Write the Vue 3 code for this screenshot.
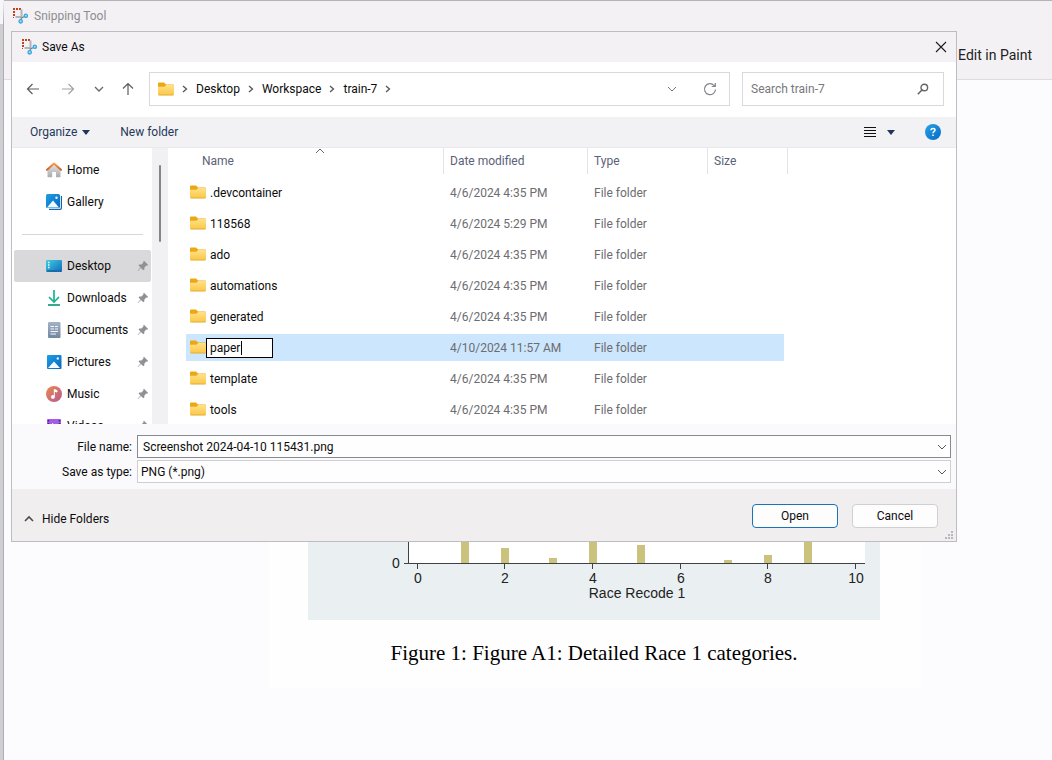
<script setup>
import { ref } from 'vue'

const crumbs = ['Desktop', 'Workspace', 'train-7']
const quick = [
  { name: 'Home', icon: 'home' },
  { name: 'Gallery', icon: 'gallery' },
]
const pinned = [
  { name: 'Desktop', icon: 'desktop', active: true },
  { name: 'Downloads', icon: 'downloads' },
  { name: 'Documents', icon: 'documents' },
  { name: 'Pictures', icon: 'pictures' },
  { name: 'Music', icon: 'music' },
  { name: 'Videos', icon: 'videos' },
]
const files = ref([
  { name: '.devcontainer', date: '4/6/2024 4:35 PM' },
  { name: '118568', date: '4/6/2024 5:29 PM' },
  { name: 'ado', date: '4/6/2024 4:35 PM' },
  { name: 'automations', date: '4/6/2024 4:35 PM' },
  { name: 'generated', date: '4/6/2024 4:35 PM' },
  { name: 'paper', date: '4/10/2024 11:57 AM', editing: true },
  { name: 'template', date: '4/6/2024 4:35 PM' },
  { name: 'tools', date: '4/6/2024 4:35 PM' },
])
const fileName = ref('Screenshot 2024-04-10 115431.png')
const bars = [
  { x: 153, h: 60 },
  { x: 193, h: 15 },
  { x: 241, h: 5 },
  { x: 281, h: 50 },
  { x: 329, h: 18 },
  { x: 416, h: 3 },
  { x: 456, h: 8 },
  { x: 496, h: 40 },
]
const ticks = [
  { x: 110, label: '0' },
  { x: 197, label: '2' },
  { x: 285, label: '4' },
  { x: 373, label: '6' },
  { x: 460, label: '8' },
  { x: 548, label: '10' },
]
</script>

<template>
  <svg class="defs" aria-hidden="true">
    <defs>
      <linearGradient id="g-folder" x1="0" y1="0" x2="0" y2="1"><stop offset="0" stop-color="#ffe08a" /><stop offset="1" stop-color="#fcc844" /></linearGradient>
      <linearGradient id="g-sky" x1="0" y1="0" x2="1" y2="1"><stop offset="0" stop-color="#1d9fe6" /><stop offset="1" stop-color="#0a66bd" /></linearGradient>
      <linearGradient id="g-desk" x1="0" y1="0" x2="1" y2="1"><stop offset="0" stop-color="#3fd0e0" /><stop offset="1" stop-color="#1268bd" /></linearGradient>
      <linearGradient id="g-wall" x1="0" y1="0" x2="0" y2="1"><stop offset="0" stop-color="#e4e4e6" /><stop offset="1" stop-color="#a9abae" /></linearGradient>
      <linearGradient id="g-roof" x1="0" y1="0" x2="0" y2="1"><stop offset="0" stop-color="#f5a04a" /><stop offset="1" stop-color="#cd6124" /></linearGradient>
      <linearGradient id="g-music" x1="0" y1="0" x2="1" y2="1"><stop offset="0" stop-color="#ea8a4c" /><stop offset="1" stop-color="#b65a92" /></linearGradient>
      <linearGradient id="g-doc" x1="0" y1="0" x2="0" y2="1"><stop offset="0" stop-color="#a3b3c9" /><stop offset="1" stop-color="#72869f" /></linearGradient>
      <linearGradient id="g-help" x1="0" y1="0" x2="1" y2="1"><stop offset="0" stop-color="#27a3e8" /><stop offset="1" stop-color="#0569c4" /></linearGradient>
      <symbol id="i-folder" viewBox="0 0 16 14">
        <path d="M0 1.500Q0 .5 1 .5H6L8 2.500H15Q16 2.500 16 3.500V7H0Z" fill="#eaa914" />
        <path d="M0 4.800H6.500L8.200 3H15.200Q16 3 16 4V12.200Q16 13.200 15 13.200H1Q0 13.200 0 12.200Z" fill="url(#g-folder)" />
        <path d="M.5 13H15.500" stroke="#d9a83c" stroke-width=".8" />
      </symbol>
      <symbol id="i-snip" viewBox="0 0 16 16">
        <path d="M1 0h2v2h-2zM4 0h2v2h-2zM7 0h2v2h-2zM1 3h2v2h-2zM1 6h2v2h-2zM1 9h1v1h-1z" fill="#c2421d" />
        <path d="M9.500 1.500V10M3.500 9H9.500" fill="none" stroke="#b1b3ba" stroke-width="2" />
        <path d="M9.500 10L12.500 8.500M9.500 9.500L9 12.500" fill="none" stroke="#777f88" stroke-width="1.300" />
        <circle cx="13.800" cy="7.800" r="1.600" fill="#a8e0f7" stroke="#35a6dd" stroke-width="1.300" />
        <circle cx="8.700" cy="13.300" r="1.700" fill="#a8e0f7" stroke="#35a6dd" stroke-width="1.300" />
      </symbol>
      <symbol id="i-pin" viewBox="0 0 12 12">
        <path d="M7 .8L11.200 5 10 5.700 9.300 5.600 7.400 7.500 7.300 9.500 6.300 10.300 4 8 1 11 .7 10.700 3.500 7.500 1.500 5.500 2.400 4.500 4.500 4.400 6.400 2.600 6.300 1.600Z" fill="#8e9196" />
      </symbol>
      <symbol id="i-home" viewBox="0 0 16 16">
        <path d="M1.500 7.500L8 2 14.500 7.500V14.500Q14.500 15.200 13.800 15.200H10V10H6.200V15.200H2.200Q1.500 15.200 1.500 14.500Z" fill="url(#g-wall)" />
        <path d="M1 7.800L8 1.500 15 7.800" fill="none" stroke="url(#g-roof)" stroke-width="2" stroke-linecap="round" stroke-linejoin="round" />
      </symbol>
      <symbol id="i-gallery" viewBox="0 0 16 16">
        <path d="M3 15.300H14Q15.400 15.300 15.400 14V2" fill="none" stroke="#0d67b5" stroke-width="1.200" />
        <rect x="0" y="0" width="14" height="14" rx="1.500" fill="url(#g-sky)" />
        <path d="M1 13.500L7 6.500 13 13.500Z" fill="#eef8ff" />
        <circle cx="10.500" cy="3.800" r="1.200" fill="#eef8ff" />
      </symbol>
      <symbol id="i-desktop" viewBox="0 0 16 16">
        <rect x="0" y="2" width="16" height="12" rx="1" fill="url(#g-desk)" />
        <path d="M2 4.500h1.500M2 7h1.500M2 9.500h1.500" stroke="#e9fcff" stroke-width="1.300" />
        <path d="M1 13H11M12 13h1M14 13h1" stroke="#154e8c" stroke-width="1" />
      </symbol>
      <symbol id="i-downloads" viewBox="0 0 16 16">
        <path d="M8 0V11.500M3 7L8 12 13 7" fill="none" stroke="#1ab394" stroke-width="1.700" />
        <path d="M2 15H14" stroke="#159a7e" stroke-width="1.700" />
      </symbol>
      <symbol id="i-documents" viewBox="0 0 16 16">
        <rect x="2" y="0" width="12.500" height="16" rx="1" fill="url(#g-doc)" />
        <path d="M4.500 4.500h3.500M4.500 7h3.500M4.500 9.500h7.500M4.500 12h5.500M9 4.500h3M9 7h3" stroke="#f4f8fd" stroke-width="1.200" />
      </symbol>
      <symbol id="i-pictures" viewBox="0 0 16 16">
        <rect x="1" y="1" width="14.500" height="14" rx="1" fill="url(#g-sky)" />
        <path d="M2 14L8 7.500 14 14Z" fill="#f4faff" />
        <circle cx="11.800" cy="4.500" r="1.200" fill="#e2f3ff" />
      </symbol>
      <symbol id="i-music" viewBox="0 0 16 16">
        <circle cx="8" cy="8" r="8" fill="url(#g-music)" />
        <path d="M8.300 10.800V3.500L11 4.500V6L8.300 5.200" fill="#fff" stroke="#fff" stroke-width="1" />
        <circle cx="6.900" cy="10.900" r="1.900" fill="#fff" />
      </symbol>
      <symbol id="i-videos" viewBox="0 0 16 16">
        <rect x="1" y="1" width="14" height="14" rx="1" fill="#a45ce6" />
        <path d="M2.500 2v12M13.500 2v12" stroke="#4b1e8c" stroke-width="1.500" stroke-dasharray="1.500 1.500" />
        <path d="M6 5L11 8 6 11Z" fill="#fff" />
      </symbol>
    </defs>
  </svg>

  <div class="screen">
    <div class="edge"></div>
    <main class="window">
      <header class="app-head">
        <div class="app-title"><svg class="ic16"><use href="#i-snip" /></svg><span>Snipping Tool</span></div>
        <button class="paint">Edit in Paint</button>
      </header>
      <section class="canvas">
        <figure class="sheet">
          <svg class="chart" viewBox="0 0 572 180" role="img" aria-label="Race Recode 1">
            <rect width="572" height="180" fill="#eaf0f2" />
            <rect x="101" y="0" width="456" height="123" fill="#fff" />
            <rect v-for="b in bars" :key="b.x" :x="b.x" :y="123 - b.h" width="8" :height="b.h" fill="#cbc27e" />
            <path d="M100.500 0V124M96 123.500H557" fill="none" stroke="#3c4245" />
            <path v-for="t in ticks" :key="t.x" :d="`M${t.x - 0.5} 123V129`" stroke="#3c4245" />
            <text x="88" y="128" text-anchor="middle">0</text>
            <text v-for="t in ticks" :key="t.label" :x="t.x" y="143" text-anchor="middle">{{ t.label }}</text>
            <text x="329" y="158" text-anchor="middle">Race Recode 1</text>
          </svg>
          <figcaption>Figure 1: Figure A1: Detailed Race 1 categories.</figcaption>
        </figure>
      </section>
    </main>

    <div class="dialog" role="dialog" aria-label="Save As">
      <div class="titlebar">
        <svg class="ic16"><use href="#i-snip" /></svg><span>Save As</span>
        <button class="close" aria-label="Close"><svg width="12" height="12" viewBox="0 0 12 12"><path d="M1 1L11 11M11 1L1 11" fill="none" stroke="#1c1c1c" stroke-width="1.100" /></svg></button>
      </div>

      <div class="navbar">
        <div class="arrows">
          <button aria-label="Back"><svg width="14" height="14" viewBox="0 0 14 14"><path d="M13 7H1.500M6.500 2L1.500 7 6.500 12" fill="none" stroke="#5c5c60" stroke-width="1.200" /></svg></button>
          <button aria-label="Forward"><svg width="14" height="14" viewBox="0 0 14 14"><path d="M1 7H12.500M7.500 2L12.500 7 7.500 12" fill="none" stroke="#a2a2a6" stroke-width="1.200" /></svg></button>
          <button aria-label="Recent locations"><svg width="10" height="10" viewBox="0 0 10 10"><path d="M1 3L5 7 9 3" fill="none" stroke="#66666a" stroke-width="1.300" /></svg></button>
          <button aria-label="Up"><svg width="14" height="14" viewBox="0 0 14 14"><path d="M7 13V1.500M2 6.500L7 1.500 12 6.500" fill="none" stroke="#5c5c60" stroke-width="1.200" /></svg></button>
        </div>
        <nav class="address">
          <svg class="folder"><use href="#i-folder" /></svg>
          <svg class="sep" viewBox="0 0 6 8"><path d="M1 1L4.500 4 1 7" /></svg>
          <template v-for="c in crumbs" :key="c">
            <a href="#">{{ c }}</a><svg class="sep" viewBox="0 0 6 8"><path d="M1 1L4.500 4 1 7" /></svg>
          </template>
          <span class="grow"></span>
          <button class="drop" aria-label="Previous locations"><svg width="10" height="10" viewBox="0 0 10 10"><path d="M1 3L5 7 9 3" fill="none" stroke="#77777b" /></svg></button>
          <button aria-label="Refresh"><svg width="14" height="14" viewBox="0 0 14 14"><path d="M12.500 7.500A5.500 5.500 0 1 1 11 3.300L12 4.300M12.300 1V4.500H8.800" fill="none" stroke="#85858a" stroke-width="1.200" /></svg></button>
        </nav>
        <label class="search">
          <input type="search" placeholder="Search train-7" aria-label="Search train-7" />
          <svg width="12" height="12" viewBox="0 0 12 12"><circle cx="7.300" cy="4.500" r="3.300" fill="none" stroke="#66666a" stroke-width="1.400" /><path d="M5 7L.8 11.200" stroke="#66666a" stroke-width="1.600" /></svg>
        </label>
      </div>

      <div class="commands">
        <button>Organize<i class="tri"></i></button>
        <button>New folder</button>
        <span class="grow"></span>
        <button class="view" aria-label="Change view"><svg width="12" height="11" viewBox="0 0 12 11"><path d="M0 .5H12M0 3.500H12M0 6.500H12M0 9.500H12" stroke="#111" /></svg><i class="tri"></i></button>
        <button class="help" aria-label="Help"><svg width="16" height="16" viewBox="0 0 16 16"><circle cx="8" cy="8" r="8" fill="url(#g-help)" /><path d="M6 6.200Q6 4.400 8 4.400 10 4.400 10 6.100 10 7.100 8.900 7.700 8 8.200 8 9.200M8 10.500V12" fill="none" stroke="#fff" stroke-width="1.500" /></svg></button>
      </div>

      <div class="browser">
        <aside class="side">
          <a v-for="q in quick" :key="q.name" href="#" class="place"><svg class="ic16"><use :href="'#i-' + q.icon" /></svg><span>{{ q.name }}</span></a>
          <hr />
          <a v-for="p in pinned" :key="p.name" href="#" class="place" :class="{ active: p.active }"><svg class="ic16"><use :href="'#i-' + p.icon" /></svg><span>{{ p.name }}</span><svg class="pin"><use href="#i-pin" /></svg></a>
        </aside>
        <div class="track"><div class="thumb"></div></div>
        <div class="listing">
          <svg class="sort" viewBox="0 0 10 6"><path d="M1 5L5 1 9 5" fill="none" stroke="#66666a" /></svg>
          <table>
            <colgroup><col class="c-name" /><col class="c-date" /><col class="c-type" /><col class="c-size" /></colgroup>
            <thead><tr><th>Name</th><th>Date modified</th><th>Type</th><th>Size</th></tr></thead>
            <tbody>
              <tr v-for="f in files" :key="f.date + f.name" :class="{ sel: f.editing }">
                <td><div class="name"><svg class="folder"><use href="#i-folder" /></svg>
                  <span v-if="f.editing" class="rename"><input :value="f.name" aria-label="Folder name" /><i class="caret"></i></span>
                  <span v-else>{{ f.name }}</span></div></td>
                <td>{{ f.date }}</td><td>File folder</td><td></td>
              </tr>
            </tbody>
          </table>
        </div>
      </div>

      <div class="fields">
        <label for="fname">File name:</label>
        <div class="combo strong"><input id="fname" v-model="fileName" /><svg width="10" height="10" viewBox="0 0 10 10"><path d="M1 3L5 7 9 3" fill="none" stroke="#55555a" /></svg></div>
        <label for="ftype">Save as type:</label>
        <div class="combo"><select id="ftype"><option>PNG (*.png)</option></select><svg width="10" height="10" viewBox="0 0 10 10"><path d="M1 3L5 7 9 3" fill="none" stroke="#55555a" /></svg></div>
      </div>

      <div class="footer">
        <button class="hide"><svg width="10" height="8" viewBox="0 0 10 8"><path d="M1 6L5 2 9 6" fill="none" stroke="#4c4c50" stroke-width="1.600" /></svg>Hide Folders</button>
        <span class="grow"></span>
        <button class="btn primary">Open</button>
        <button class="btn">Cancel</button>
        <svg class="grip" viewBox="0 0 8 8"><path d="M6 0h2v2h-2zM3 3h2v2h-2zM6 3h2v2h-2zM0 6h2v2h-2zM3 6h2v2h-2zM6 6h2v2h-2z" fill="#b9b8ba" /></svg>
      </div>
    </div>
  </div>
</template>

<style>
body { margin: 0; background: #fcfbfd; overflow: hidden; }
</style>

<style scoped>
* { box-sizing: border-box; }
.defs { position: absolute; width: 0; height: 0; }
.screen { position: relative; display: flex; min-height: 100vh; font: 12px/16px "Segoe UI", Roboto, "Noto Sans", sans-serif; color: #0c0c0c; }
button, input, select { font: inherit; color: inherit; background: none; border: 0; padding: 0; margin: 0; outline: none; }
a { color: inherit; text-decoration: none; }
button { display: inline-flex; align-items: center; justify-content: center; }
svg { display: block; flex: none; }
.ic16 { width: 16px; height: 16px; }
.folder { width: 16px; height: 14px; }
.grow { flex: 1; }
.edge { width: 4px; background: #cfced2; border-right: 1px solid #aeadb2; border-top: 24px solid #f6f5f7; }
.window { flex: 1; display: flex; flex-direction: column; }
.app-head { height: 80px; background: #f3f1f4; border-top: 1px solid #b4b3b7; border-bottom: 1px solid #dddbdf; padding: 7px 20px 0 8px; display: flex; flex-direction: column; }
.app-title { display: flex; gap: 6px; color: #8d8c90; }
.paint { align-self: flex-end; margin-top: 21px; height: 20px; font-size: 14px; color: #222; }
.canvas { flex: 1; padding: 0 131px 0 265px; }
.sheet { margin: 0; height: 608px; background: #fefefe; display: flex; flex-direction: column; justify-content: flex-end; padding: 0 41px 22px 39px; }
.chart { width: 100%; height: auto; }
.chart text { font: 14px "Liberation Sans", Arial, sans-serif; fill: #222; }
figcaption { font: 21px/26px "Palatino Linotype", "Liberation Serif", serif; color: #000; text-align: center; margin-top: 20px; }

.dialog { position: absolute; left: 11px; right: 95px; top: 31px; border: 1px solid #bdbcc0; background: #fff; display: flex; flex-direction: column; }
.titlebar { height: 30px; background: #f3f1f4; display: flex; align-items: center; gap: 5px; padding: 0 9px 0 9px; }
.close { margin-left: auto; }
.navbar { height: 55px; display: flex; align-items: center; padding: 0 12px 1px; }
.arrows { display: flex; width: 125px; padding-left: 1px; gap: 15px; }
.arrows button { width: 16px; }
.arrows button:nth-child(2) { margin-left: 4px; }
.arrows button:nth-child(4) { margin-left: -2px; }
.address { flex: 1; height: 34px; border: 1px solid #dad8dd; display: flex; align-items: center; padding: 0 12px 0 8px; margin-right: 12px; }
.sep { width: 6px; height: 8px; margin: 0 8px; fill: none; stroke: #55555a; stroke-width: 1.3; }
.address .drop { margin-right: 26px; }
.search { width: 202px; height: 34px; border: 1px solid #dad8dd; display: flex; align-items: center; padding: 0 14px 0 8px; }
.search input { flex: 1; min-width: 0; }
.search input::placeholder { color: #78777b; opacity: 1; }
.commands { height: 31px; background: #f2f2f5; border-bottom: 1px solid #e9e8ec; display: flex; align-items: center; padding: 0 15px 0 18px; color: #253858; gap: 30px; }
.tri { width: 0; height: 0; border: 4px solid transparent; border-top: 5px solid #20355c; border-bottom: 0; margin-left: 5px; }
.view .tri { margin-left: 11px; }

.browser { height: 276px; display: flex; overflow: hidden; }
.side { width: 140px; padding: 6px 1px 0 2px; }
.place { height: 32px; display: flex; align-items: center; gap: 5px; padding: 0 2px 0 32px; }
.place.active { background: #d9d8da; border-radius: 2px; }
.pin { width: 12px; height: 12px; margin-left: auto; }
.side hr { border: 0; border-top: 1px solid #d8d7da; margin: 16px 8px 15px; }
.track { width: 16px; background: #f1f0f2; padding: 17px 0 0 7px; }
.thumb { width: 2px; height: 77px; background: #858488; border-radius: 1px; }
.listing { flex: 1; position: relative; padding-left: 18px; }
.sort { position: absolute; left: 147px; top: 0; width: 10px; height: 6px; }
table { border-collapse: separate; border-spacing: 0; table-layout: fixed; width: 602px; }
.c-name { width: 258px; } .c-date { width: 144px; } .c-type { width: 120px; } .c-size { width: 80px; }
th { height: 26px; font-weight: normal; text-align: left; color: #5b6178; padding: 0 0 0 6px; border-right: 1px solid #e4e3e7; }
th:first-child { padding-left: 16px; }
thead::after { content: ""; display: table-row; height: 3px; }
td { height: 31px; padding: 0 0 0 6px; color: #6d6c70; }
td:first-child { padding-left: 4px; color: #0c0c0c; }
.name { display: flex; align-items: center; gap: 4px; }
.name .folder { margin-bottom: 2px; }
.sel td { background: linear-gradient(#cce6fd, #cce6fd) 0 2px / 100% 27px no-repeat; }
.sel td:last-child { background-size: 76px 27px; }
.rename { position: relative; }
.rename input { display: block; width: 67px; height: 20px; border: 1px solid #000; background: #fff; padding: 0 3px; margin-left: -4px; }
.caret { position: absolute; left: 31px; top: 3px; width: 1px; height: 14px; background: #000; }

.fields { background: #faf9fb; padding: 11px 5px 6px 0; display: grid; grid-template-columns: 120px 1fr; column-gap: 5px; row-gap: 2px; align-items: center; }
.fields label { text-align: right; }
.combo { height: 23px; border: 1px solid #cfced3; background: #fefefe; display: flex; align-items: center; padding: 0 3px; }
.combo.strong { border-color: #858a92; padding-left: 5px; }
.combo input, .combo select { flex: 1; min-width: 0; appearance: none; }
.footer { position: relative; height: 52px; background: #f0eeef; display: flex; align-items: center; padding: 2px 18px 0 12px; }
.hide { gap: 8px; margin-top: 6px; }
.btn { width: 86px; height: 24px; border: 1px solid #d0cfd2; border-radius: 4px; background: #fdfdfe; margin-left: 14px; }
.primary { border-color: #1a73b8; }
.grip { position: absolute; right: 3px; bottom: 2px; width: 8px; height: 8px; }
</style>
